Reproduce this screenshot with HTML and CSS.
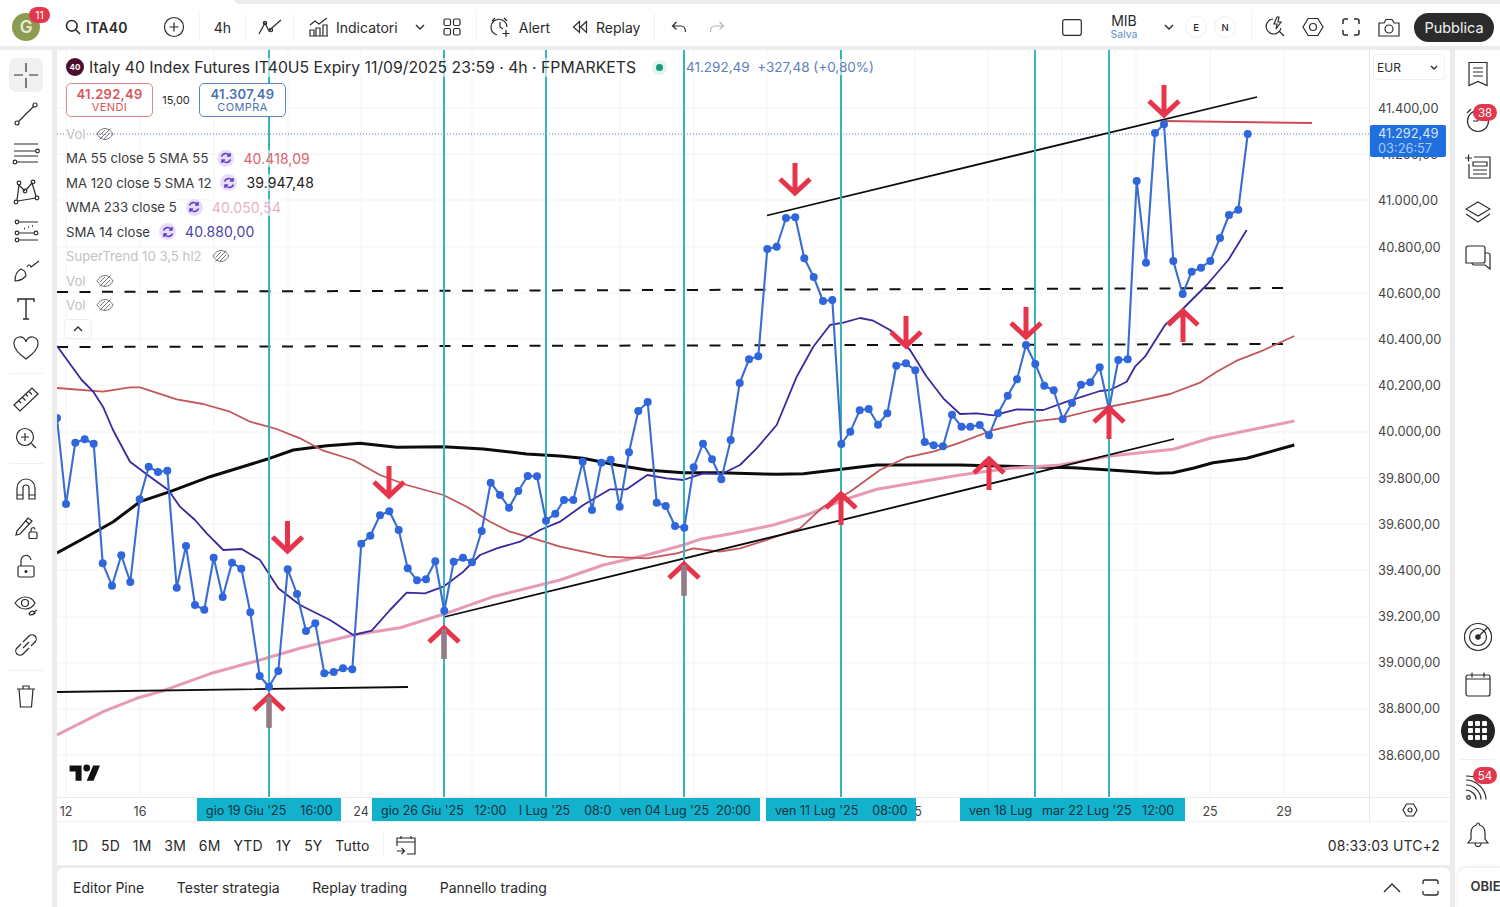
FILE: index.html
```html
<!DOCTYPE html>
<html lang="it">
<head>
<meta charset="utf-8">
<title>ITA40</title>
<link rel="stylesheet" href="styles.css">
</head>
<body>
<header class="topbar">
  <div class="avatar"><span class="avatar-g">G</span><span class="badge avatar-badge">11</span></div>
  <div class="search"><svg class="ic" width="16" height="16" viewBox="0 0 16 16"><circle cx="6.8" cy="6.8" r="5.3" stroke-width="1.6"/><path d="M10.8 10.8L15 15" stroke-width="1.6"/></svg><b>ITA40</b></div>
  <div class="tb plus"><svg class="ic" width="22" height="22" viewBox="0 0 22 22"><circle cx="11" cy="11" r="9.5"/><path d="M11 6.5v9M6.5 11h9"/></svg></div>
  <i class="sep sep-plus"></i>
  <div class="tb interval">4h</div>
  <i class="sep"></i>
  <div class="tb style"><svg class="ic" width="24" height="18" viewBox="0 0 24 18"><path d="M1 16L7 5l4 8L15 9l8-7"/><circle cx="7" cy="5" r="1.6"/><circle cx="13" cy="12" r="1.6"/></svg></div>
  <i class="sep"></i>
  <div class="tb indicators"><svg class="ic" width="20" height="20" viewBox="0 0 20 20"><path d="M1 19V13h4v6zM7 19v-8h4v8zM14 19V8h4v11zM1 19h18M1 8l5-4 4 3 8-6"/></svg><span>Indicatori</span></div>
  <div class="tb chev"><svg class="ic" width="10" height="6" viewBox="0 0 10 6"><path d="M1 1l4 4 4-4" stroke-width="1.4"/></svg></div>
  <div class="tb layout"><svg class="ic" width="18" height="18" viewBox="0 0 18 18"><rect x="1" y="1" width="6.5" height="6.5" rx="1.5"/><rect x="10.5" y="1" width="6.5" height="6.5" rx="1.5"/><rect x="1" y="10.5" width="6.5" height="6.5" rx="1.5"/><rect x="10.5" y="10.5" width="6.5" height="6.5" rx="1.5"/></svg></div>
  <i class="sep sep-layout"></i>
  <div class="tb alert"><svg class="ic" width="22" height="22" viewBox="0 0 22 22"><path d="M8 19a8 8 0 1 1 10-8M11 6v5l3 2M3 5l3-3M15 2l3 3M17 14v7M13.500 17.500h7"/></svg><span>Alert</span></div>
  <div class="tb replay"><svg class="ic" width="16" height="14" viewBox="0 0 16 14"><path d="M7.500 1.500L1.500 7l6 5.500zM14.500 1.500L8.500 7l6 5.500z"/></svg><span>Replay</span></div>
  <i class="sep sep-replay"></i>
  <div class="tb undo"><svg class="ic" width="16" height="12" viewBox="0 0 16 12"><path d="M5.500 1L1.500 5l4 3.500M1.500 5H10c3 0 4.500 2 4.500 6"/></svg></div>
  <div class="tb redo"><svg class="ic faint" width="16" height="12" viewBox="0 0 16 12"><path d="M10.500 1l4 4-4 3.500M14.500 5H6C3 5 1.500 7 1.500 11"/></svg></div>
  <div class="tb-right">
    <div class="tb"><svg class="ic" width="20" height="17" viewBox="0 0 20 17"><rect x="0.700" y="0.700" width="18.600" height="15.600" rx="2"/></svg></div>
    <div class="mib"><span>MIB</span><small>Salva</small></div>
    <div class="tb mib-chev"><svg class="ic" width="10" height="6" viewBox="0 0 10 6"><path d="M1 1l4 4 4-4" stroke-width="1.4"/></svg></div>
    <span class="pill pill-e">E</span>
    <span class="pill pill-n">N</span>
    <i class="sep sep-pills"></i>
    <div class="tb t-flash"><svg class="ic" width="22" height="22" viewBox="0 0 22 22"><path d="M9 3a7.500 7.500 0 1 0 8 9M15 15l5 5M13 1l-3 7h3l-1 5 5-7h-3l1-5z"/></svg></div>
    <div class="tb t-gap"><svg class="ic" width="22" height="20" viewBox="0 0 22 20"><path d="M6.200 1.500h9.600L21 10l-5.200 8.500H6.200L1 10z"/><circle cx="11" cy="10" r="3.500"/></svg></div>
    <div class="tb t-gap"><svg class="ic" width="18" height="18" viewBox="0 0 18 18"><path d="M1 6V3a2 2 0 0 1 2-2h3M12 1h3a2 2 0 0 1 2 2v3M17 12v3a2 2 0 0 1-2 2h-3M6 17H3a2 2 0 0 1-2-2v-3" stroke-width="1.500"/></svg></div>
    <div class="tb t-gap"><svg class="ic" width="22" height="19" viewBox="0 0 22 19"><path d="M1 5h5l2-3.500h6L16 5h5v13H1z"/><circle cx="11" cy="11" r="4"/></svg></div>
    <button class="publish">Pubblica</button>
  </div>
</header>

<div class="app">
  <aside class="left">
    <div class="lbtn lbtn-on"><svg class="ic" width="28" height="28" viewBox="0 0 28 28"><path d="M14 2v9M14 17v10M2 14h9M17 14h9"/></svg></div>
    <div class="lbtn"><svg class="ic" width="28" height="28" viewBox="0 0 28 28"><circle cx="5" cy="23" r="2"/><circle cx="23" cy="5" r="2"/><path d="M6.500 21.500l15-15"/></svg></div>
    <div class="lbtn"><svg class="ic" width="28" height="28" viewBox="0 0 28 28"><path d="M2 5h24M2 12h22M2 17h24M5 23h21"/><circle cx="25.500" cy="12" r="1.800"/><circle cx="3" cy="23" r="1.800"/></svg></div>
    <div class="lbtn"><svg class="ic" width="28" height="28" viewBox="0 0 28 28"><circle cx="4" cy="24" r="1.800"/><circle cx="7" cy="5" r="1.800"/><circle cx="13" cy="13" r="1.800"/><circle cx="21" cy="4" r="1.800"/><circle cx="25" cy="20" r="1.800"/><path d="M5 22L7 7l6 6M14 12l6-7 4 13M5.500 23L24 20"/></svg></div>
    <div class="lbtn"><svg class="ic" width="28" height="28" viewBox="0 0 28 28"><circle cx="5" cy="5" r="1.800"/><circle cx="5" cy="16" r="1.800"/><circle cx="5" cy="23" r="1.800"/><circle cx="24" cy="16" r="1.800"/><path d="M7 5h19M7 16h15M7 23h19"/><path d="M12 11.500h1M16 10h1M20 9h1" stroke-width="1.500"/></svg></div>
    <div class="lbtn"><svg class="ic" width="28" height="28" viewBox="0 0 28 28"><path d="M3 25c0-6 2-10 6-12 3 1 5 4 5 7-3 3-7 5-11 5zM15 11c1-3 3-3 4 0l8-6"/></svg></div>
    <div class="lbtn"><svg class="ic" width="28" height="28" viewBox="0 0 28 28"><path d="M6 7V4h16v3M14 4v20M11 24h6" stroke-width="1.400"/></svg></div>
    <div class="lbtn"><svg class="ic" width="28" height="28" viewBox="0 0 28 28"><path d="M14 25C7 20 2 15 2 10a6 6 0 0 1 12-2 6 6 0 0 1 12 2c0 5-5 10-12 15z"/></svg></div>
    <div class="lsep"></div>
    <div class="lbtn"><svg class="ic" width="28" height="28" viewBox="0 0 28 28"><path d="M2 20L20 3l6 6L8 26zM7 16l2 2M10.500 12.500l3 3M14 9.500l2 2M17 6.500l3 3"/></svg></div>
    <div class="lbtn"><svg class="ic" width="28" height="28" viewBox="0 0 28 28"><circle cx="13" cy="13" r="8.500"/><path d="M13 9v8M9 13h8M19.500 19.500l4.500 4.500"/></svg></div>
    <div class="lsep"></div>
    <div class="lbtn"><svg class="ic" width="28" height="28" viewBox="0 0 28 28"><path d="M5 24V13a9 9 0 0 1 18 0v11h-6V13a3 3 0 0 0-6 0v11zM5 20h6M17 20h6"/></svg></div>
    <div class="lbtn"><svg class="ic" width="28" height="28" viewBox="0 0 28 28"><path d="M4 21l1-4L16 4l4 3L8 20zM14 7l3 3"/><rect x="17" y="18" width="8" height="6.500" rx="1"/><path d="M19 18v-2a2 2 0 0 1 4-.5"/></svg></div>
    <div class="lbtn"><svg class="ic" width="28" height="28" viewBox="0 0 28 28"><rect x="6" y="13" width="16" height="11" rx="1.500"/><path d="M9 13V8a5 5 0 0 1 10-1"/><circle cx="14" cy="18.500" r="1" fill="#2b2b2b"/></svg></div>
    <div class="lbtn"><svg class="ic" width="28" height="28" viewBox="0 0 28 28"><path d="M3 11c3-4 6-6 10-6s8 2 10 6c-2 4-6 6-10 6s-7-2-10-6z"/><circle cx="13" cy="11" r="3.500"/><path d="M17 22c1-2 3-3 4-3l2 2c-1 1-3 2-5 2zM22 20l3-2"/></svg></div>
    <div class="lbtn"><svg class="ic" width="28" height="28" viewBox="0 0 28 28"><path d="M11 11l6-6a4 4 0 0 1 6 6l-4 4M17 17l-6 6a4 4 0 0 1-6-6l4-4M11 17l6-6"/></svg></div>
    <div class="lsep"></div>
    <div class="lbtn"><svg class="ic" width="28" height="28" viewBox="0 0 28 28"><path d="M5 7h18M11 7V4h6v3M7 7l1.500 18h11L21 7"/></svg></div>
  </aside>

  <main class="center">
    <section class="chart">
      <div class="plot">
        <svg class="canvas" width="1312" height="747" viewBox="57 50 1312 747">
          <defs>
            <marker id="dot" markerUnits="userSpaceOnUse" markerWidth="10" markerHeight="10" refX="5" refY="5"><circle cx="5" cy="5" r="4" fill="#2f66de"/></marker>
            <g id="adown" class="arrow"><path d="M0 -31V-3M-15 -15L0 -1L15 -15"/></g>
            <g id="aup" class="arrow"><path d="M0 32V3M-15 15L0 1L15 15"/></g>
          </defs>
          <path class="grid" d="M66 50V797M140 50V797M214 50V797M288 50V797M361 50V797M435 50V797M472 50V797M546 50V797M620 50V797M694 50V797M767 50V797M841 50V797M915 50V797M988 50V797M1062 50V797M1136 50V797M1210 50V797M1284 50V797M57 108H1369M57 154H1369M57 200H1369M57 247H1369M57 293H1369M57 339H1369M57 385H1369M57 432H1369M57 478H1369M57 524H1369M57 570H1369M57 617H1369M57 663H1369M57 709H1369M57 755H1369"/>
          <path class="lastline" d="M57 134H1369"/>
          <path class="dash" d="M57 292L1293 288M57 347L1293 344"/>
          <polyline class="ma-black" points="57,553 86.700,536.700 113.300,521.700 140,501.700 170,491.700 210,476.700 266.700,459.300 293.300,450 326.700,445.700 360,443.300 396.700,447.300 443.300,446.700 483.300,449 526.700,454 560,456 583,458.300 616.700,465 646.700,470 683.300,472.700 720,472.700 776.700,474.300 803.300,473.700 843.300,469 876.700,465 960,465 1026.700,466.700 1073,467.700 1110,470 1156.700,473.300 1173,472.700 1193,468.300 1213,462.700 1246.700,458.300 1294.300,445"/>
          <polyline class="ma-pink" points="57,735 103.300,711.700 136.700,698.300 163.300,690.700 213.300,672.700 260,660 300,648.300 353.300,635 400,627.700 443.300,614.300 493.300,596.700 560,580 603.300,565 646.700,555 683.300,545 700,539.300 733.300,533.300 773.300,525 806.700,515 843.300,500 876.700,489.300 960,475 1010,468.300 1060,465 1110,456 1173.300,449.300 1210,438.300 1294.300,421"/>
          <polyline class="ma-red" points="57,388 103,391.700 130,387.300 140,387.300 176.700,399.300 203,404 230,411.700 250,421.700 276.700,429 300,438.300 323.300,450.700 353.300,460 380,475 406.700,485 443.300,495 466.700,506.700 490,521.700 510,531.700 533.300,538.300 560,546.700 583.300,551.700 606.700,556.700 646.700,558.300 676.700,553.300 693.300,548.300 720,551.700 740,548.300 766.700,540 800,528.300 823.300,506.700 850,491.700 880,470 906.700,457.300 933.300,451.700 960,442.700 993.300,430 1026.700,422.300 1060,418.300 1093.300,410 1140,400.700 1170,394 1200,382.700 1216.700,371.700 1236.700,360.700 1260,351.700 1294.300,336"/>
          <polyline class="ma-navy" points="57,346 81.700,380 93.300,391.700 103,406.700 113,430 130,461.700 150,476.700 168.300,490 180,506.700 195,520 206.700,533.300 223.300,550 241.700,549 260,560 278.300,588.300 300,605 330,620 353.300,635 371.700,630.700 390,610 406.700,592.700 425,593.300 443.300,586.700 463.300,571.700 480,555 496.700,548.300 520,541.700 540,530 560,521.700 583.300,505 610,489.300 626.700,489.300 647.300,475 666.700,478.300 683.300,480 703.300,473.300 721.700,474 740,465 756.700,448.300 776.700,425 796.700,376.700 813.300,346.700 830,325 843.300,322.700 860,318 873.300,320.700 890,330 910,350 926.700,376.700 943.300,398.300 960,414 976.700,413.300 993.300,415.300 1016.700,409.300 1043.300,410 1066.700,401.700 1100,391 1110,390 1126.700,381.700 1135,366.700 1145,356.700 1165,325 1181.700,310 1206.700,285 1228.300,260 1246.700,230"/>
          <path class="thin" d="M57 692L408 687M444 617L1174 439M767 215.500L1257 97"/>
          <path class="redline" d="M1164 121L1312 123"/>
          <path class="teal" d="M269 50V797M444 50V797M546 50V797M684 50V797M841 50V797M1035 50V797M1109 50V797"/>
          <polyline class="price" marker-start="url(#dot)" marker-mid="url(#dot)" marker-end="url(#dot)" points="57,418 66,504 75.300,442.700 84.700,439.300 93.700,443.700 102.700,563.300 112,585.700 121.300,555.300 130.300,582 139.700,499.300 148.700,466.700 158,472 167.300,470.700 176.700,587.700 186,546 195,605 204.300,609.700 213.700,557.700 222.700,597 232,562.700 241.300,568.700 250.300,612.300 259.700,676 269,686.700 278.300,671 287.700,569.300 297,594 306,631 315.300,623.300 324.300,673.300 333.700,672 343,668.300 352.300,669.300 361.300,543.700 370.300,535.700 380,515.300 389.300,511.300 398.700,530 407.700,568.300 417,580.300 426,579.300 435.300,561.300 444.300,610.700 453.700,561.700 463,557.700 472,562.300 481.700,531 490.700,482.700 500,495 509,507.700 518.300,491 527.700,476 537,476.300 546,520.700 555.300,513.700 564,500 573.300,500 582.700,461.700 592,510 601.300,462.700 610.700,459.700 619.700,506.700 629,452.300 638.300,411 647.700,402 656.700,502.700 665.700,506 675,526 684.300,527.700 693.700,467.300 703,443.700 712,459.300 721.300,479.300 730.700,440 739.700,383 749,359.300 758.300,356.300 767.300,249 776.700,246.700 786,218 795.300,217.300 804.300,258.300 813.700,277 823,301 832.300,300 841.300,444 850.300,431.700 859.700,410.300 868.700,409 878,424.700 887.300,413.300 896.300,365.700 906,363.300 915.300,370.300 924.700,442 933.700,445.300 943,446.300 952,414.700 961.500,426.700 970.300,426.700 979.700,425 989,435.300 998,413.300 1007.700,395.700 1017,379.300 1026,345 1035.300,364 1044.300,385.700 1053.700,390.300 1062.700,419.300 1072,403 1081,384.700 1090.300,382.300 1099.700,367.300 1109,409.300 1118.300,360 1127.700,359.300 1136.700,181 1146,262.700 1155,133 1164,124.300 1173.300,261 1182.700,294 1191.700,271.700 1201,267.700 1210.300,261 1220,238 1229,215 1238.300,209.700 1247.700,134"/>
          <use href="#adown" x="287.500" y="552"/>
          <use href="#adown" x="389" y="497"/>
          <use href="#adown" x="795" y="194"/>
          <use href="#adown" x="906" y="347"/>
          <use href="#adown" x="1026" y="338"/>
          <use href="#adown" x="1164" y="116"/>
          <use href="#aup" x="269" y="695"/>
          <use href="#aup" x="444" y="627"/>
          <use href="#aup" x="684" y="563"/>
          <use href="#aup" x="841" y="493"/>
          <use href="#aup" x="989" y="458"/>
          <use href="#aup" x="1109" y="407"/>
          <use href="#aup" x="1183" y="310"/>
          <path class="ashaft" d="M269 697V728M444 629V659M684 565V596"/>
        </svg>

        <div class="legend">
          <div class="title"><span class="sym">40</span><span class="title-text">Italy 40 Index Futures IT40U5 Expiry 11/09/2025 23:59 · 4h · FPMARKETS</span><span class="live"></span><span class="quote">41.292,49&nbsp; +327,48 (+0,80%)</span></div>
          <div class="trade">
            <div class="tbtn sell"><b>41.292,49</b><span>VENDI</span></div>
            <span class="spread">15,00</span>
            <div class="tbtn buy"><b>41.307,49</b><span>COMPRA</span></div>
          </div>
          <div class="row muted"><span>Vol</span><svg class="ic eye" width="18" height="14" viewBox="0 0 18 14"><path d="M1 7c2-3.500 5-5.500 8-5.500S15 3.500 17 7c-2 3.500-5 5.500-8 5.500S3 10.500 1 7zM3.500 12.500L14.500 1.500M6.500 9.500l5-5M8 12l6-6M4 8l5-5"/></svg></div>
          <div class="row"><span>MA 55 close 5 SMA 55</span><span class="sync"><svg width="12" height="12" viewBox="0 0 12 12"><path d="M1.500 4.500A4.700 4.700 0 0 1 10 4M10.500 7.500A4.700 4.700 0 0 1 2 8M10 1v3H7M2 11V8h3"/></svg></span><span class="val v-red">40.418,09</span></div>
          <div class="row"><span>MA 120 close 5 SMA 12</span><span class="sync"><svg width="12" height="12" viewBox="0 0 12 12"><path d="M1.500 4.500A4.700 4.700 0 0 1 10 4M10.500 7.500A4.700 4.700 0 0 1 2 8M10 1v3H7M2 11V8h3"/></svg></span><span class="val v-black">39.947,48</span></div>
          <div class="row"><span>WMA 233 close 5</span><span class="sync"><svg width="12" height="12" viewBox="0 0 12 12"><path d="M1.500 4.500A4.700 4.700 0 0 1 10 4M10.500 7.500A4.700 4.700 0 0 1 2 8M10 1v3H7M2 11V8h3"/></svg></span><span class="val v-pink">40.050,54</span></div>
          <div class="row"><span>SMA 14 close</span><span class="sync"><svg width="12" height="12" viewBox="0 0 12 12"><path d="M1.500 4.500A4.700 4.700 0 0 1 10 4M10.500 7.500A4.700 4.700 0 0 1 2 8M10 1v3H7M2 11V8h3"/></svg></span><span class="val v-navy">40.880,00</span></div>
          <div class="row muted"><span>SuperTrend 10 3,5 hl2</span><svg class="ic eye" width="18" height="14" viewBox="0 0 18 14"><path d="M1 7c2-3.500 5-5.500 8-5.500S15 3.500 17 7c-2 3.500-5 5.500-8 5.500S3 10.500 1 7zM3.500 12.500L14.500 1.500M6.500 9.500l5-5M8 12l6-6M4 8l5-5"/></svg></div>
          <div class="row muted"><span>Vol</span><svg class="ic eye" width="18" height="14" viewBox="0 0 18 14"><path d="M1 7c2-3.500 5-5.500 8-5.500S15 3.500 17 7c-2 3.500-5 5.500-8 5.500S3 10.500 1 7zM3.500 12.500L14.500 1.500M6.500 9.500l5-5M8 12l6-6M4 8l5-5"/></svg></div>
          <div class="row muted"><span>Vol</span><svg class="ic eye" width="18" height="14" viewBox="0 0 18 14"><path d="M1 7c2-3.500 5-5.500 8-5.500S15 3.500 17 7c-2 3.500-5 5.500-8 5.500S3 10.500 1 7zM3.500 12.500L14.500 1.500M6.500 9.500l5-5M8 12l6-6M4 8l5-5"/></svg></div>
          <div class="collapse"><svg class="ic" width="10" height="6" viewBox="0 0 10 6"><path d="M1 5l4-4 4 4" stroke-width="1.300"/></svg></div>
        </div>

        <svg class="tvlogo" width="32" height="24" viewBox="0 0 36 28"><path d="M14 22H7V11H0V4h14v18zM28 22h-8l7.500-18h8L28 22z"/><circle cx="20" cy="7" r="4"/></svg>
      </div>
      <div class="axis">
        <div class="currency"><span>EUR</span><svg class="ic" width="8" height="5" viewBox="0 0 8 5"><path d="M1 1l3 3 3-3" stroke-width="1.400"/></svg></div>
        <div class="prices">
          <span>41.400,00</span><span>41.200,00</span><span>41.000,00</span><span>40.800,00</span><span>40.600,00</span><span>40.400,00</span><span>40.200,00</span><span>40.000,00</span><span>39.800,00</span><span>39.600,00</span><span>39.400,00</span><span>39.200,00</span><span>39.000,00</span><span>38.800,00</span><span>38.600,00</span>
        </div>
        <div class="lasttag"><span>41.292,49</span><span class="tag-time">03:26:57</span></div>
      </div>
    </section>

    <section class="timeaxis">
      <div class="ticks">
        <span class="tick t12">12</span><span class="tick t16">16</span><span class="tick t24">24</span><span class="tick t5">5</span><span class="tick t25">25</span><span class="tick t29">29</span>
        <span class="tt tt1">gio 19 Giu '25 &nbsp;&nbsp; 16:00</span>
        <span class="tt tt2">gio 26 Giu '25 &nbsp; 12:00</span>
        <span class="tt tt3">l Lug '25 &nbsp;&nbsp; 08:00</span>
        <span class="tt tt4">ven 04 Lug '25 &nbsp;20:00</span>
        <span class="tt tt5">ven 11 Lug '25 &nbsp;&nbsp; 08:00</span>
        <span class="tt tt6">ven 18 Lug</span>
        <span class="tt tt7">mar 22 Lug '25 &nbsp; 12:00</span>
      </div>
      <div class="axis-corner"><svg class="ic" width="16" height="14" viewBox="0 0 16 14"><path d="M4.500 1h7L15 7l-3.500 6h-7L1 7z"/><circle cx="8" cy="7" r="2"/></svg></div>
    </section>

    <section class="rangebar">
      <span>1D</span><span>5D</span><span>1M</span><span>3M</span><span>6M</span><span>YTD</span><span>1Y</span><span>5Y</span><span>Tutto</span>
      <i class="sep sep-range"></i>
      <svg class="ic gotoicon" width="20" height="22" viewBox="0 0 20 22"><path d="M1 12V4h18v16h-8M1 8h18M5 2v3M15 2v3M1 17h7M5.500 14l3 3-3 3"/></svg>
      <span class="clock">08:33:03 UTC+2</span>
    </section>

    <section class="panel">
      <span>Editor Pine</span><span>Tester strategia</span><span>Replay trading</span><span>Pannello trading</span>
      <div class="panel-right">
        <svg class="ic" width="18" height="10" viewBox="0 0 18 10"><path d="M1 9l8-8 8 8" stroke-width="1.300"/></svg>
        <svg class="ic" width="17" height="17" viewBox="0 0 17 17"><path d="M1 5V3a2 2 0 0 1 2-2h11a2 2 0 0 1 2 2v2M16 12v2a2 2 0 0 1-2 2H3a2 2 0 0 1-2-2v-2" stroke-width="1.300"/></svg>
      </div>
    </section>
  </main>

  <aside class="right">
    <div class="rbtn"><svg class="ic" width="24" height="26" viewBox="0 0 24 26"><path d="M3 1.500h18v23l-9-4-9 4zM7 7h10M7 11h10M7 15h10"/></svg></div>
    <div class="rbtn"><svg class="ic" width="26" height="26" viewBox="0 0 26 26"><circle cx="13" cy="14" r="10.500"/><path d="M13 14H8M13 14V8M2 6l4-4"/></svg><span class="badge rbadge">38</span></div>
    <div class="rbtn"><svg class="ic" width="28" height="26" viewBox="0 0 28 26"><path d="M1 5h7M4.500 1.500v7M10 4h16v21H5V11M9 9h14v4H9zM9 17h14M9 21h14"/></svg></div>
    <div class="rbtn"><svg class="ic" width="26" height="22" viewBox="0 0 26 22"><path d="M13 1l12 7-12 7L1 8zM1 13l12 8 12-8"/></svg></div>
    <div class="rbtn"><svg class="ic" width="26" height="26" viewBox="0 0 26 26"><path d="M1 3a2 2 0 0 1 2-2h15a2 2 0 0 1 2 2v13a2 2 0 0 1-2 2H1zM20 8h3a2 2 0 0 1 2 2v14l-5-4H9a2 2 0 0 1-2-2"/></svg></div>
    <div class="rgroup">
      <div class="rbtn rbtn-b"><svg class="ic" width="30" height="30" viewBox="0 0 30 30"><circle cx="15" cy="15" r="13.500"/><circle cx="15" cy="15" r="8.500"/><circle cx="15" cy="15" r="2.200" fill="#2b2b2b"/><path d="M15 15l9-9"/></svg></div>
      <div class="rbtn rbtn-b"><svg class="ic" width="26" height="26" viewBox="0 0 26 26"><path d="M1 6a2 2 0 0 1 2-2h20a2 2 0 0 1 2 2v17a2 2 0 0 1-2 2H3a2 2 0 0 1-2-2zM1 8h24M7 1.500v5M19 1.500v5"/></svg></div>
      <div class="rbtn rbtn-b"><div class="apps"><i></i><i></i><i></i><i></i><i></i><i></i><i></i><i></i><i></i></div></div>
      <div class="rsep"></div>
      <div class="rbtn rbtn-b"><svg class="ic" width="26" height="26" viewBox="0 0 26 26"><circle cx="3.500" cy="22.500" r="1.800"/><path d="M1 15c5 0 10 4 10 9.500M1 10c8 0 15 7 15 14.500M1 5c10 0 20 9 20 19.500M1 1c6 0 10 1 14 3"/></svg><span class="badge rbadge rbadge-b">54</span></div>
      <div class="rbtn rbtn-b"><svg class="ic" width="22" height="26" viewBox="0 0 22 26"><path d="M11 1c-1 0-1.500 1-1.500 2C6 4 4 7 4 11v6l-3 4h20l-3-4v-6c0-4-2-7-5.500-8C12.500 2 12 1 11 1zM8 21c0 2 1.500 3.500 3 3.500s3-1.500 3-3.500"/></svg></div>
    </div>
    <div class="obie">OBIE</div>
  </aside>
</div>
</body>
</html>
```

FILE: styles.css
```css
* { box-sizing: border-box; }
html, body { margin: 0; height: 907px; overflow: hidden; }
body { background: #ececec; font-family: Inter, "Noto Sans", sans-serif; color: #2a2a2a; font-size: 14px; }

.ic { fill: none; stroke: #2b2b2b; stroke-width: 1.2; display: block; flex: none; }
.faint { stroke: #b5b5b5; }
.badge { background: #e2374c; color: #fff; border-radius: 9px; font-size: 11.500px; display: flex; align-items: center; justify-content: center; }

.topbar { height: 46px; background: #fff; display: flex; align-items: center; padding: 8px 0 0 12px; margin-bottom: 4px; position: relative; }
.topbar::before { content: ""; position: absolute; left: 235px; right: 0; top: 0; height: 4px; background: #ececec; border-radius: 0 0 0 6px; }
.avatar { width: 28px; height: 28px; border-radius: 50%; background: #8b9c50; position: relative; display: flex; align-items: center; justify-content: center; margin-top: 0; }
.avatar-g { color: #e8ecd8; font-size: 17px; font-weight: 600; }
.avatar-badge { position: absolute; left: 17px; top: -6px; width: 21px; height: 16px; font-size: 10.500px; }
.search { margin-left: 25px; width: 90px; display: flex; align-items: center; gap: 5px; }
.search b { font-weight: 600; font-size: 14px; letter-spacing: .2px; }
.tb { display: flex; align-items: center; justify-content: center; height: 24px; font-size: 14px; flex: none; }
.plus { width: 22px; margin-left: 8px; }
.sep { display: block; width: 1px; height: 26px; background: #f0f0f0; flex: none; }
.sep-plus { margin-left: 14px; }
.interval { width: 45px; }
.style { width: 47px; }
.indicators { margin-left: 15px; gap: 7px; }
.chev { width: 18px; margin-left: 13px; }
.layout { width: 18px; margin-left: 14px; }
.sep-layout { margin-left: 15px; }
.alert { margin-left: 12px; gap: 8px; }
.replay { margin-left: 22px; gap: 8px; }
.sep-replay { margin-left: 14px; }
.undo { width: 16px; margin-left: 16px; }
.redo { width: 16px; margin-left: 22px; }
.tb-right { margin-left: auto; display: flex; align-items: center; padding-right: 6px; }
.mib { width: 36px; margin-left: 24px; display: flex; flex-direction: column; align-items: center; line-height: 1; }
.mib span { font-size: 14px; }
.mib small { font-size: 10.500px; color: #5f8fc8; margin-top: 2px; }
.mib-chev { width: 16px; margin-left: 19px; }
.pill { width: 22px; height: 22px; border: 1px solid #efefef; border-radius: 50%; font-size: 9.500px; font-weight: 500; display: flex; align-items: center; justify-content: center; }
.pill-e { margin-left: 8px; }
.pill-n { margin-left: 7px; }
.sep-pills { margin-left: 15px; }
.t-flash { width: 24px; margin-left: 11px; }
.t-gap { width: 24px; margin-left: 14px; }
.publish { margin-left: 13px; width: 80px; height: 29px; background: #2b2b2b; color: #f2f2f2; border: 0; border-radius: 15px; font: 14.500px Inter, sans-serif; padding: 0; }

.app { display: grid; grid-template-columns: 52px 1393px 45px; column-gap: 5px; height: 857px; }
.left { background: #fff; display: flex; flex-direction: column; align-items: center; padding-top: 5px; }
.lbtn { width: 34px; height: 39px; display: flex; align-items: center; justify-content: center; flex: none; }
.lbtn-on { height: 34px; margin: 3px 0 2px; background: #f1f1f1; border-radius: 7px; }
.lsep { width: 34px; height: 12px; flex: none; position: relative; }
.lsep::after { content: ""; position: absolute; left: 0; right: 0; top: 6px; height: 1px; background: #efefef; }

.center { display: flex; flex-direction: column; min-width: 0; }
.chart { height: 747px; background: #fff; display: flex; }
.plot { width: 1312px; position: relative; overflow: hidden; }
.canvas { display: block; }
.canvas .grid { stroke: #f3f3f3; stroke-width: 1; fill: none; }
.canvas polyline { fill: none; stroke-linejoin: round; }
.lastline { stroke: #5a80b8; stroke-width: 1; stroke-dasharray: 1 2; }
.dash { stroke: #111; stroke-width: 2; stroke-dasharray: 11 11.500; fill: none; }
.ma-black { stroke: #0c0c0c; stroke-width: 3; }
.ma-pink { stroke: #e79ab4; stroke-width: 3; }
.ma-red { stroke: #c4555a; stroke-width: 1.800; }
.ma-navy { stroke: #382a9e; stroke-width: 1.800; }
.thin { stroke: #0c0c0c; stroke-width: 1.800; fill: none; }
.redline { stroke: #d04a55; stroke-width: 2; fill: none; }
.teal { stroke: #38b3bd; stroke-width: 2; fill: none; }
.price { stroke: #3a6dd0; stroke-width: 2.100; }
.arrow path { fill: none; stroke: #e6354a; stroke-width: 5; }
.ashaft { stroke: #8c7f8a; stroke-width: 5; fill: none; }

.legend { position: absolute; left: 9px; top: 7px; display: flex; flex-direction: column; align-items: flex-start; }
.title { display: flex; align-items: center; height: 20px; font-size: 15.750px; }
.sym { width: 18px; height: 18px; border-radius: 50%; background: #4a0f2e; color: #fff; font-size: 8px; font-weight: 700; display: flex; align-items: center; justify-content: center; }
.title-text { margin-left: 5px; background: rgba(255,255,255,.6); white-space: nowrap; }
.live { width: 7px; height: 7px; margin-left: 20px; border-radius: 50%; background: #149b7c; box-shadow: 0 0 0 4px #e3f3ef; flex: none; }
.quote { margin-left: 23px; font-size: 13.500px; color: #5c80b8; background: rgba(255,255,255,.6); white-space: nowrap; }
.trade { display: flex; align-items: center; margin-top: 6px; }
.tbtn { width: 87px; height: 34px; background: #fff; border: 1px solid; border-radius: 5px; display: flex; flex-direction: column; align-items: center; justify-content: center; line-height: 1.100; }
.tbtn b { font-size: 13px; font-weight: 600; letter-spacing: .3px; }
.tbtn span { font-size: 11px; letter-spacing: .4px; }
.sell { border-color: #d98a88; color: #d6565a; }
.buy { border-color: #5d86c0; color: #4a72b4; }
.spread { width: 46px; text-align: center; font-size: 11px; }
.row { display: flex; align-items: center; height: 24.500px; font-size: 13.200px; white-space: nowrap; color: #3a3a3a; }
.row:nth-child(3) { margin-top: 4.500px; }
.row > span { background: rgba(255,255,255,.6); }
.muted { color: #c2c2c2; }
.eye { stroke: #777; stroke-width: 1; margin-left: 10px; }
.row > .sync { width: 17px; height: 17px; border-radius: 50%; background: #e9dcfb; margin: 0 9px; display: flex; align-items: center; justify-content: center; }
.sync svg { display: block; fill: none; stroke: #5a3dc4; stroke-width: 1.500; }
.row > .val { font-size: 14px; letter-spacing: .1px; }
.v-red { color: #d9636a; }
.v-black { color: #222; }
.v-pink { color: #e6b3c6; }
.v-navy { color: #4a45a8; }
.collapse { width: 28px; height: 20px; margin-top: 1.500px; margin-left: -2px; background: #fff; border: 1px solid #eee; border-radius: 4px; display: flex; align-items: center; justify-content: center; }
.tvlogo { position: absolute; left: 12px; top: 712px; fill: #111; }

.axis { width: 81px; border-left: 1px solid #e5e5e5; position: relative; }
.currency { height: 26px; width: 72px; margin: 4px 0 0 3px; border: 1px solid #f0f0f0; border-radius: 4px; display: flex; align-items: center; justify-content: space-between; padding: 0 6px 0 3px; font-size: 12px; }
.prices { display: flex; flex-direction: column; margin-top: 6px; padding-left: 8px; }
.prices span { height: 46.200px; line-height: 46.200px; font-size: 12.800px; color: #454545; white-space: nowrap; }
.lasttag { position: absolute; left: 0; top: 75px; width: 76px; height: 32px; background: #1f6fdf; border-radius: 2px; color: #d8e6fb; font-size: 12.800px; line-height: 14.500px; padding: 2px 0 0 8px; display: flex; flex-direction: column; }
.tag-time { color: #a9c9f4; }

.timeaxis { height: 25px; background: #fff; display: flex; border-top: 1px solid #ececec; border-bottom: 1px solid #f0f0f0; font-size: 12.500px; }
.ticks { width: 1312px; position: relative; overflow: hidden; }
.tick { position: absolute; top: 6px; width: 30px; text-align: center; color: #444; }
.t12 { left: -6px; } .t16 { left: 68px; } .t24 { left: 289px; } .t5 { left: 846px; } .t25 { left: 1138px; } .t29 { left: 1212px; }
.tt { position: absolute; top: 0; height: 23px; line-height: 25px; background: #12b1cc; color: #14343f; padding-left: 9px; white-space: nowrap; overflow: hidden; }
.tt1 { left: 140px; width: 144px; }
.tt2 { left: 315px; width: 144px; }
.tt3 { left: 459px; width: 95px; padding-left: 3px; }
.tt4 { left: 554px; width: 149px; }
.tt5 { left: 709px; width: 150px; }
.tt6 { left: 903px; width: 76px; }
.tt7 { left: 976px; width: 152px; }
.axis-corner { width: 81px; border-left: 1px solid #e5e5e5; display: flex; align-items: center; justify-content: center; }

.rangebar { height: 43px; background: #fff; display: flex; align-items: center; padding: 3px 0 0 15px; gap: 12.800px; font-size: 14px; letter-spacing: .2px; }
.sep-range { height: 24px; }
.clock { margin-left: auto; padding-right: 10px; letter-spacing: .1px; }

.panel { flex: 1; margin-top: 3px; background: #fff; display: flex; align-items: center; padding-left: 16px; gap: 32.600px; font-size: 14px; border-radius: 6px 6px 0 0; }
.panel-right { margin-left: auto; display: flex; align-items: center; gap: 21px; padding-right: 11px; }

.right { background: #fff; display: flex; flex-direction: column; align-items: center; padding-top: 1px; position: relative; }
.rbtn { width: 45px; height: 46px; display: flex; align-items: center; justify-content: center; flex: none; position: relative; }
.rbtn-b { height: 47px; }
.rgroup { margin-top: auto; display: flex; flex-direction: column; align-items: center; margin-bottom: 10px; }
.rsep { width: 34px; height: 1px; background: #efefef; margin: 5px 0 4px; }
.rbadge { position: absolute; left: 18px; top: 7px; width: 24px; height: 17px; }
.rbadge-b { top: 3px; }
.apps { width: 34px; height: 34px; border-radius: 50%; background: #232323; display: grid; grid-template-columns: repeat(3, 5px); grid-auto-rows: 5px; gap: 2px; align-content: center; justify-content: center; }
.apps i { background: #fff; border-radius: 1px; }
.obie { height: 39px; width: 100%; margin-left: 5px; padding-left: 13px; line-height: 36px; font-weight: 600; font-size: 13px; color: #333; background: #fff; border-radius: 8px 0 0 0; box-shadow: 0 -1px 4px #e6e6e6; white-space: nowrap; overflow: hidden; }
```
